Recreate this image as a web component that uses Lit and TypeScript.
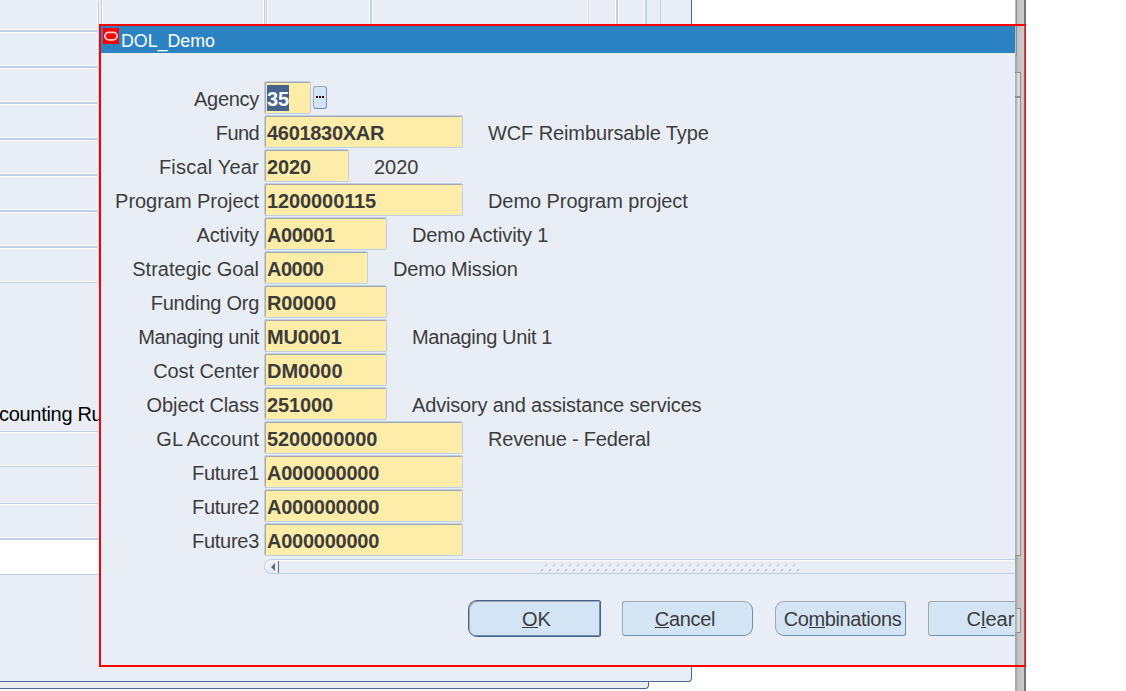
import { LitElement, html, css, svg, nothing } from "lit";
import { customElement } from "lit/decorators.js";

/* Each text is paired with its tracking in pixels. */
type Tracked = [string, number];
interface Segment { label: Tracked; value: Tracked; size: string; note?: Tracked; selected?: boolean; }

const SEGMENTS: Segment[] = [
  { label: ["Agency", -0.3], value: ["35", 0], size: "xs", selected: true },
  { label: ["Fund", -0.6], value: ["4601830XAR", -0.3], size: "xl", note: ["WCF Reimbursable Type", -0.11] },
  { label: ["Fiscal Year", 0.2], value: ["2020", -0.1], size: "s", note: ["2020", 0] },
  { label: ["Program Project", -0.04], value: ["1200000115", -0.1], size: "xl", note: ["Demo Program project", -0.07] },
  { label: ["Activity", -0.1], value: ["A00001", -0.4], size: "l", note: ["Demo Activity 1", -0.1] },
  { label: ["Strategic Goal", 0], value: ["A0000", -0.5], size: "m", note: ["Demo Mission", -0.17] },
  { label: ["Funding Org", -0.27], value: ["R00000", -0.2], size: "l" },
  { label: ["Managing unit", -0.38], value: ["MU0001", -0.2], size: "l", note: ["Managing Unit 1", -0.37] },
  { label: ["Cost Center", -0.08], value: ["DM0000", 0], size: "l" },
  { label: ["Object Class", -0.08], value: ["251000", -0.1], size: "l", note: ["Advisory and assistance services", -0.16] },
  { label: ["GL Account", 0], value: ["5200000000", -0.1], size: "xl", note: ["Revenue - Federal", -0.2] },
  { label: ["Future1", -0.28], value: ["A000000000", -0.25], size: "xl" },
  { label: ["Future2", -0.28], value: ["A000000000", -0.25], size: "xl" },
  { label: ["Future3", -0.28], value: ["A000000000", -0.25], size: "xl" },
];

const tracked = ([text, gap]: Tracked) => html`<span style="letter-spacing:${gap}px">${text}</span>`;

@customElement("back-sheet")
class BackSheet extends LitElement {
  static styles = css`
    :host { display: block; width: 692px; height: 691px; overflow: hidden; }
    .sheet { box-sizing: border-box; width: 692px; height: 682px; background: #e9eef6; border: solid #4a6590; border-width: 0 1px 1px 0; border-radius: 0 0 4px 0; }
    .under { box-sizing: border-box; width: 649px; height: 7px; background: #e9eef6; border: solid #4a6590; border-width: 0 1px 1px 0; border-radius: 0 0 4px 0; }
    .head { display: flex; height: 31px; }
    .cell, .row { box-sizing: border-box; border: 1px solid #bfd0e6; border-left: 0; border-radius: 0 3px 3px 0; box-shadow: inset -1px 0 #fff, inset 0 1px #fff, inset 0 -1px #fff; }
    .cell { height: 31px; border-top: 0; box-shadow: inset -1px 0 #fff, inset 0 -1px #fff; }
    .row { width: 99px; height: 36px; }
    .c0 { width: 99px; }
    .col { box-sizing: border-box; height: 31px; border-left: 1px solid #bfd0e6; box-shadow: inset 1px 0 #fff, inset -1px 0 #fff; }
    .w1 { width: 164px; margin-left: 2px; }
    .end { border-right: 1px solid #bfd0e6; }
    .w2 { width: 104px; margin-left: 1px; }
    .w3 { width: 218px; border-left-width: 2px; }
    .w4 { width: 28px; }
    .w5 { width: 29px; border-left-width: 2px; }
    .w6 { width: 15px; border-left-width: 2px; box-shadow: none; }
    .w7 { width: 30px; box-shadow: none; }
    .caption { height: 148px; padding-top: 119px; box-sizing: border-box; font: 20px/24px "Liberation Sans", Arial, sans-serif; letter-spacing: -0.3px; color: #000; white-space: nowrap; text-indent: -1px; }
    .band { box-sizing: border-box; border: 0 solid #bfd0e6; }
    .b1 { height: 36px; border-width: 1px 0; box-shadow: inset 0 1px #fff, inset 0 -1px #fff; }
    .b2 { height: 36px; }
    .b3 { height: 37px; border-width: 1px 0 2px; box-shadow: inset 0 1px #fff, inset 0 -1px #fff; }
    .b4 { height: 35px; background: #fff; border-bottom-width: 1px; }
  `;
  render() {
    return html`
      <div class="sheet">
        <div class="head">
          <div class="cell c0"></div>
          ${["w1 end", "w2", "w3", "w4", "w5", "w6", "w7"].map((w) => html`<div class="col ${w}"></div>`)}
        </div>
        ${Array.from({ length: 7 }, () => html`<div class="row"></div>`)}
        <div class="caption">counting Rules</div>
        <div class="band b1"></div><div class="band b2"></div><div class="band b3"></div><div class="band b4"></div>
      </div>
      <div class="under"></div>`;
  }
}

@customElement("side-strip")
class SideStrip extends LitElement {
  static styles = css`
    :host { display: flex; flex-direction: column; box-sizing: border-box; width: 11px; height: 691px; border-right: 2px solid #747474; background: linear-gradient(90deg, #a6a6a6 2px, #bdbdbd 2px, #cacaca 7px); }
    .top { width: 2px; height: 56px; box-sizing: border-box; background: #bdbdbd; border: solid #909090; border-width: 0 1px 1px 0; }
    .thumb { box-sizing: border-box; width: 6px; border: 1px solid #929292; border-left: 0; background: linear-gradient(90deg, #b3b3b3 2px, #dadada 2px); }
    .t1 { height: 25px; margin-top: 16px; }
    .t2 { height: 459px; }
    .t3 { height: 25px; margin-top: 52px; }
  `;
  render() {
    return html`<div class="top"></div><div class="thumb t1"></div><div class="thumb t2"></div><div class="thumb t3"></div>`;
  }
}

@customElement("flex-dialog")
class FlexDialog extends LitElement {
  static styles = css`
    :host { display: block; box-sizing: border-box; width: 927px; height: 643px; border: solid #f00; border-width: 2px 1px 2px 2px; font: 20px/24px "Liberation Sans", Arial, sans-serif; color: #3c3c3c; white-space: nowrap; }
    .pane { width: 914px; height: 639px; background: #e9eef6; overflow: hidden; }
    .title { display: flex; height: 27px; background: #2c83c3; color: #fff; font-size: 17.8px; line-height: 30px; }
    .logo { flex: none; width: 16px; height: 16px; margin: 2px 2px 0 2px; }
    .form { padding-top: 28px; }
    .line { display: flex; height: 34px; }
    .label { width: 158px; margin-right: 5px; text-align: right; line-height: 37px; }
    .field { box-sizing: border-box; height: 33px; border: 1px solid #bfd0e6; border-radius: 2px; background: #feeda9; box-shadow: inset 1px 1px #a3a8b0; padding: 3px 0 0 2px; font-weight: 700; line-height: 28px; }
    .xs { width: 47px; } .s { width: 85px; } .m { width: 104px; } .l { width: 123px; } .xl { width: 199px; }
    .sel { display: inline-block; height: 26px; line-height: 28px; background: #466390; color: #fff; vertical-align: top; }
    .note { margin-left: 25px; line-height: 37px; }
    .lov { box-sizing: border-box; width: 14px; height: 23px; margin: 5px 0 0 2px; border: 1px solid; border-color: #a3a8b0 #6f8fb5 #6f8fb5 #a3a8b0; border-radius: 3px; background: #d3e4f4; display: flex; justify-content: center; gap: 1px; padding-top: 9px; }
    .lov i { width: 2px; height: 2px; background: #300; }
    .scroll { display: flex; box-sizing: border-box; height: 15px; margin: 2px 0 0 163px; border: 1px solid #bfd0e6; border-right: 0; border-radius: 8px 0 0 8px; box-shadow: inset 1px 1px #fff; width: 760px; }
    .arrow { width: 13px; border-right: 1px solid #666880; height: 12px; margin-top: 1px; }
    .arrow svg, .grip, .logo { display: block; }
    .grip { margin-left: 261px; }
    .buttons { display: flex; margin: 26px 0 0 367px; }
    .btn { box-sizing: border-box; flex: none; width: 131px; height: 35px; margin: 1px 22px 0 0; border: 1px solid; border-color: #a3a8b0 #6f8fb0 #6f8fb0 #a3a8b0; background: #d3e4f4; border-radius: 3px; text-align: center; line-height: 34px; }
    .ok { width: 133px; height: 37px; line-height: 36px; margin: 0 21px 0 0; border-color: #466390; border-radius: 9px 2px 2px 9px; box-shadow: inset 1px 1px #a3a8b0, inset -1px -1px #6f8fb0; padding-left: 4px; }
    .cancel { border-radius: 3px 9px 9px 3px; padding-right: 5px; letter-spacing: -0.3px; }
    .comb { border-radius: 9px 3px 3px 9px; padding-left: 4px; letter-spacing: -0.4px; }
    .clear { width: 131px; padding-right: 6px; }
    u { text-decoration: none; background: linear-gradient(#3c3c3c, #3c3c3c) 0 19px / 100% 1px no-repeat; }
  `;
  private grip() {
    const dots: number[][] = [];
    for (let i = 0; i < 33; i++) {
      dots.push([i * 8, 9]);
      if (i < 32) dots.push([i * 8 + 4, 4]);
    }
    return html`<svg class="grip" width="262" height="13" shape-rendering="crispEdges">
      ${dots.map(([x, y]) => svg`<path d="M${x} ${y}h2v1h-1v1h-1z" fill="#fff"/><path d="M${x + 2} ${y}h1v1h-1v1h-1v-1h1z" fill="#8ea0bd"/>`)}
    </svg>`;
  }
  render() {
    return html`<div class="pane">
      <div class="title">
        <svg class="logo" viewBox="0 0 16 16"><rect width="16" height="16" fill="#f00"/><rect x="2" y="4.4" width="12" height="7.4" rx="3.7" fill="none" stroke="#ffd0d0" stroke-width="1.8"/></svg>
        <span class="name">DOL_Demo</span>
      </div>
      <div class="form">
        ${SEGMENTS.map((s) => html`<div class="line">
          <div class="label">${tracked(s.label)}</div>
          <div class="field ${s.size}">${s.selected ? html`<span class="sel">${s.value[0]}</span>` : tracked(s.value)}</div>
          ${s.selected ? html`<div class="lov"><i></i><i></i><i></i></div>` : nothing}
          ${s.note ? html`<div class="note">${tracked(s.note)}</div>` : nothing}
        </div>`)}
      </div>
      <div class="scroll">
        <div class="arrow"><svg width="13" height="12"><path d="M10 2v8L6 6z" fill="#666880"/></svg></div>
        ${this.grip()}
      </div>
      <div class="buttons">
        <div class="btn ok"><u>O</u>K</div>
        <div class="btn cancel"><u>C</u>ancel</div>
        <div class="btn comb">Co<u>m</u>binations</div>
        <div class="btn clear">C<u>l</u>ear</div>
      </div>
    </div>`;
  }
}

@customElement("app-root")
class AppRoot extends LitElement {
  static styles = css`
    :host { display: block; position: relative; width: 1126px; height: 691px; overflow: hidden; background: #fff; }
    .desk { display: flex; gap: 323px; }
    .win { position: absolute; left: 99px; top: 24px; }
  `;
  render() {
    return html`<div class="desk"><back-sheet></back-sheet><side-strip></side-strip></div><flex-dialog class="win"></flex-dialog>`;
  }
}
